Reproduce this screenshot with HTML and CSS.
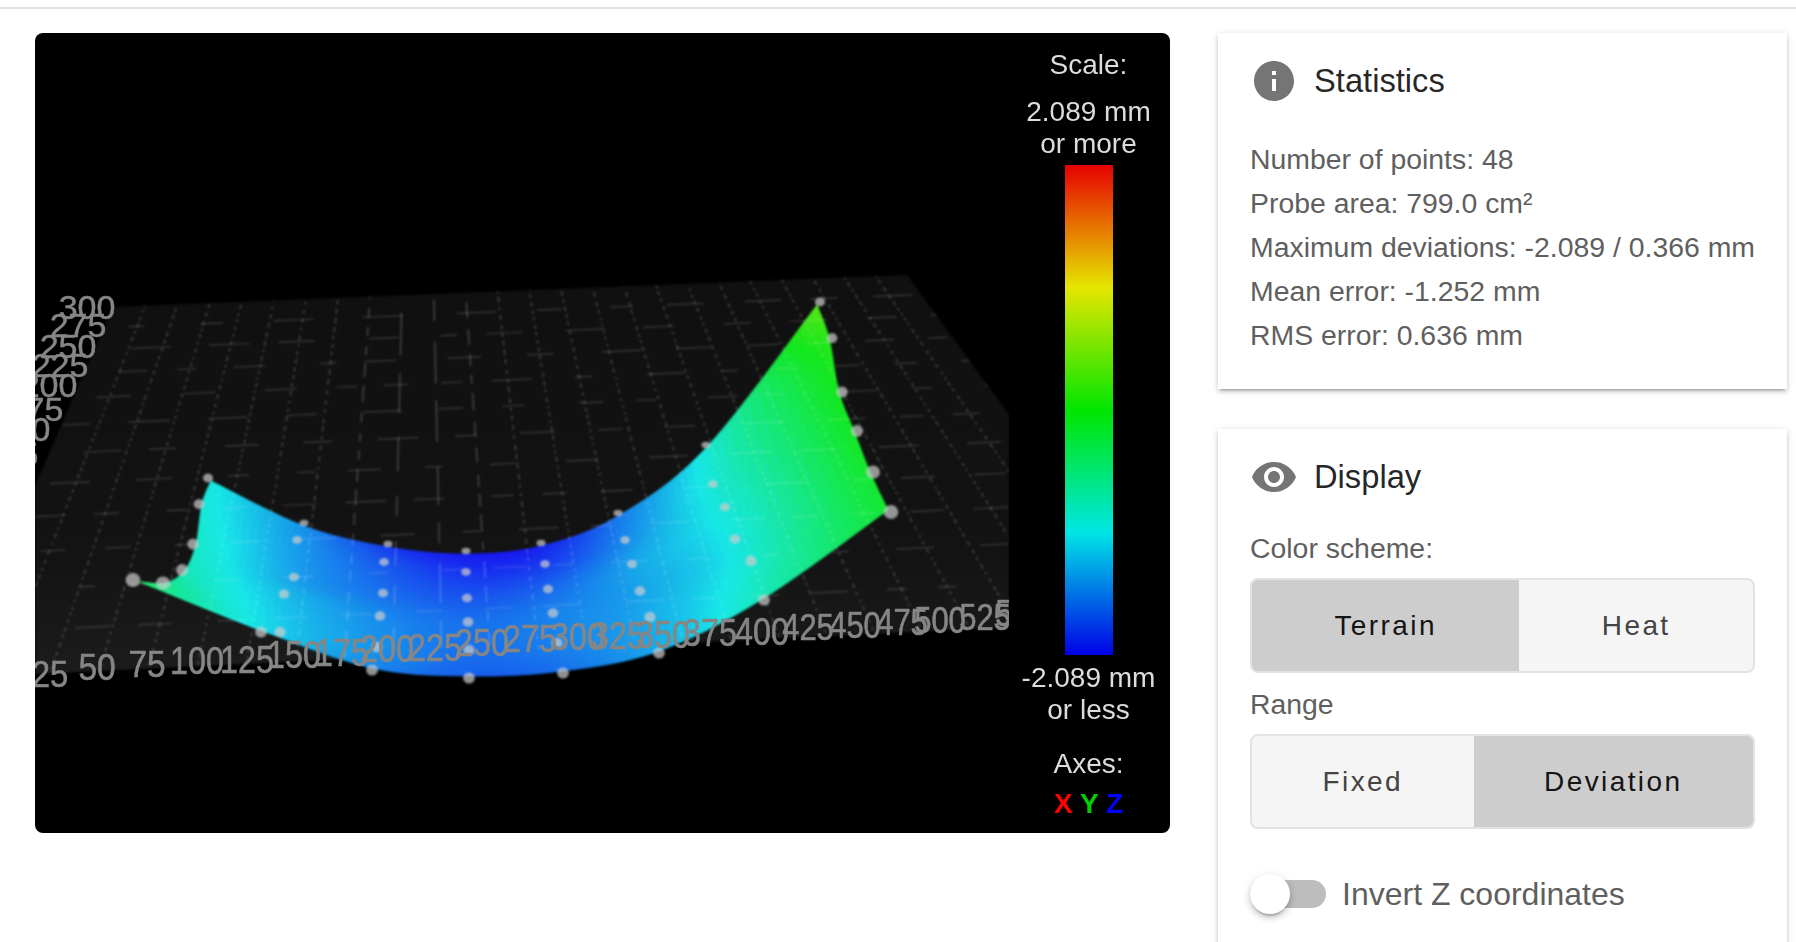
FILE: index.html
```html
<!DOCTYPE html>
<html lang="en">
<head>
<meta charset="utf-8">
<title>Height Map</title>
<link rel="stylesheet" href="styles.css">
</head>
<body>
<div class="topline"></div>
<main class="layout">
  <section class="viewer">
    <div class="stage">
      <canvas id="scene" class="scene" width="974" height="800"></canvas>
      <svg class="labels" viewBox="0 0 974 800" width="974" height="800" xmlns="http://www.w3.org/2000/svg">
        <g class="axis-y">
          <text transform="translate(-25 433)">125</text>
          <text transform="translate(-13 408)">150</text>
          <text transform="translate(0 388)">175</text>
          <text transform="translate(14 364)">200</text>
          <text transform="translate(25 344)">225</text>
          <text transform="translate(33 325)">250</text>
          <text transform="translate(43 304)">275</text>
          <text transform="translate(52 286)">300</text>
        </g>
        <g class="axis-x">
          <text transform="translate(15 654) scale(1.06 1.18)">25</text>
          <text transform="translate(62 647) scale(1.08 1.18)">50</text>
          <text transform="translate(112 644) scale(1.08 1.18)">75</text>
          <text transform="translate(162 641) scale(1.04 1.25)">100</text>
          <text transform="translate(212 640) scale(1.04 1.25)">125</text>
          <text transform="translate(259 635) scale(1.04 1.25)">150</text>
          <text transform="translate(307 633) scale(1.04 1.25)">175</text>
          <text transform="translate(352 629) scale(1.04 1.25)">200</text>
          <text transform="translate(400 628) scale(1.04 1.25)">225</text>
          <text transform="translate(447 623) scale(1.04 1.25)">250</text>
          <text transform="translate(495 619) scale(1.04 1.25)">275</text>
          <text transform="translate(543 617) scale(1.04 1.25)">300</text>
          <text transform="translate(583 616) scale(1.04 1.25)">325</text>
          <text transform="translate(628 615) scale(1.04 1.25)">350</text>
          <text transform="translate(675 613) scale(1.04 1.25)">375</text>
          <text transform="translate(727 612) scale(1.04 1.25)">400</text>
          <text transform="translate(773 607) scale(1 1.22)">425</text>
          <text transform="translate(820 605) scale(1 1.22)">450</text>
          <text transform="translate(867 602) scale(1 1.22)">475</text>
          <text transform="translate(905 600) scale(1 1.22)">500</text>
          <text transform="translate(950 597) scale(1 1.22)">525</text>
          <text transform="translate(986 593) scale(1 1.22)">550</text>
        </g>
      </svg>
    </div>
    <aside class="legend">
      <div class="legend-title">Scale:</div>
      <div class="legend-value">2.089 mm<br>or more</div>
      <div class="legend-bar"></div>
      <div class="legend-low">-2.089 mm<br>or less</div>
      <div class="legend-axes">Axes:</div>
      <div class="legend-xyz"><span class="axis-red">X</span> <span class="axis-green">Y</span> <span class="axis-blue">Z</span></div>
    </aside>
  </section>

  <div class="sidebar">
    <section class="card">
      <header class="card-head">
        <svg class="icon" viewBox="0 0 24 24" width="48" height="48" xmlns="http://www.w3.org/2000/svg"><path d="M12 2C6.48 2 2 6.48 2 12s4.48 10 10 10 10-4.48 10-10S17.52 2 12 2zm1 15h-2v-6h2v6zm0-8h-2V7h2v2z"/></svg>
        <h2 class="card-title">Statistics</h2>
      </header>
      <div class="stats">
        <div>Number of points: 48</div>
        <div>Probe area: 799.0 cm²</div>
        <div>Maximum deviations: -2.089 / 0.366 mm</div>
        <div>Mean error: -1.252 mm</div>
        <div>RMS error: 0.636 mm</div>
      </div>
    </section>

    <section class="card card-display">
      <header class="card-head">
        <svg class="icon" viewBox="0 0 24 24" width="48" height="48" xmlns="http://www.w3.org/2000/svg"><path d="M12 4.5C7 4.5 2.73 7.61 1 12c1.73 4.39 6 7.5 11 7.5s9.27-3.11 11-7.5c-1.73-4.39-6-7.5-11-7.5zM12 17c-2.76 0-5-2.24-5-5s2.24-5 5-5 5 2.24 5 5-2.24 5-5 5zm0-8c-1.66 0-3 1.34-3 3s1.34 3 3 3 3-1.34 3-3-1.34-3-3-3z"/></svg>
        <h2 class="card-title">Display</h2>
      </header>
      <div class="field-label">Color scheme:</div>
      <div class="toggle-group">
        <button class="toggle active">Terrain</button>
        <button class="toggle">Heat</button>
      </div>
      <div class="field-label">Range</div>
      <div class="toggle-group">
        <button class="toggle">Fixed</button>
        <button class="toggle active">Deviation</button>
      </div>
      <label class="switch-row">
        <span class="switch"><span class="switch-thumb"></span></span>
        <span class="switch-text">Invert Z coordinates</span>
      </label>
    </section>
  </div>
</main>
<script src="app.js"></script>
</body>
</html>
```
FILE: styles.css
```css
* { box-sizing: border-box; }
html, body { margin: 0; padding: 0; height: 942px; overflow: hidden; background: #fff; }
body { font-family: "Liberation Sans", Arial, sans-serif; }

.topline { height: 9px; border-bottom: 2px solid #e0e0e0; }

.layout {
  display: flex;
  align-items: flex-start;
  gap: 48px;
  padding: 24px 0 0 35px;
}

.viewer {
  display: flex;
  width: 1135px;
  height: 800px;
  flex: none;
  background: #000;
  border-radius: 8px;
  overflow: hidden;
}

.stage {
  position: relative;
  width: 974px;
  height: 800px;
  flex: none;
  overflow: hidden;
}
.scene { display: block; filter: blur(0.8px); }
.labels { position: absolute; left: 0; top: 0; filter: blur(0.7px); }
.labels text {
  fill: #868686;
  stroke: #868686;
  stroke-width: 0.5px;
  text-anchor: middle;
  font-family: "Liberation Sans", Arial, sans-serif;
}
.axis-y text { font-size: 34px; }
.axis-x text { font-size: 31px; }

.legend {
  flex: 1;
  display: flex;
  flex-direction: column;
  align-items: center;
  padding: 16px 2px 0 0;
  color: #dcdcdc;
  font-size: 28px;
  line-height: 32px;
  text-align: center;
  filter: blur(0.5px);
}
.legend-value { margin-top: 15px; }
.legend-bar {
  width: 48px;
  height: 490px;
  margin-top: 5px;
  flex: none;
  background: linear-gradient(to bottom, #e60000 0%, #e6e600 25%, #00e600 50%, #00e6e6 75%, #0000e6 100%);
}
.legend-low { margin-top: 7px; }
.legend-axes { margin-top: 22px; }
.legend-xyz { margin-top: 8px; font-weight: 700; }
.axis-red { color: #ff0000; }
.axis-green { color: #00d000; }
.axis-blue { color: #0000ff; }

.sidebar {
  width: 569px;
  flex: none;
  display: flex;
  flex-direction: column;
  gap: 40px;
}

.card {
  background: #fff;
  padding: 24px 32px 32px;
  box-shadow: 0 4px 2px -3px rgba(0,0,0,.25), 0 3px 4px 0 rgba(0,0,0,.14), 0 1px 8px 0 rgba(0,0,0,.12);
}
.card-display { padding-bottom: 60px; }

.card-head { display: flex; align-items: center; gap: 16px; height: 48px; }
.icon { fill: #757575; flex: none; }
.card-title { margin: 0; font-size: 32.7px; font-weight: 400; color: rgba(0,0,0,.87); }

.stats { margin-top: 32px; font-size: 28.4px; line-height: 44px; color: #5f5f5f; }

.field-label { font-size: 28.4px; line-height: 44px; color: #5f5f5f; }
.card-head + .field-label { margin-top: 25px; }

.toggle-group {
  display: flex;
  height: 95px;
  margin: 8px 0 9px;
  border: 2px solid #e2e2e2;
  border-radius: 8px;
  overflow: hidden;
  background: #f5f5f5;
}
.toggle {
  flex: 1 1 auto;
  border: 0;
  padding: 0 32px;
  background: #f5f5f5;
  color: #444;
  font-family: inherit;
  font-size: 28px;
  letter-spacing: 2.4px;
}
.toggle.active { background: #cdcdcd; color: #141414; }

.switch-row { display: flex; align-items: center; gap: 16px; height: 40px; margin-top: 45px; }
.switch { position: relative; display: block; width: 76px; height: 28px; border-radius: 14px; background: #bdbdbd; flex: none; }
.switch-thumb {
  position: absolute;
  left: 0;
  top: -6px;
  width: 40px;
  height: 40px;
  border-radius: 50%;
  background: #fff;
  box-shadow: 0 4px 2px -2px rgba(0,0,0,.2), 0 4px 6px 0 rgba(0,0,0,.14), 0 2px 10px 0 rgba(0,0,0,.12);
}
.switch-text { font-size: 32px; color: #5f5f5f; }
```
FILE: app.js
```js
(function () {
  var canvas = document.getElementById('scene');
  var ctx = canvas.getContext('2d');
  var OX = 35, OY = 33;

  // Seeded random so the broken grid is stable between runs.
  var seed = 12345;
  function rnd() { seed = (seed * 16807) % 2147483647; return seed / 2147483647; }

  // Plane corners in page coordinates.
  var NL = [-49, 678], NR = [1159, 620], FR = [907, 275], FL = [113, 307];

  function homography(a, b, c, d) {
    // Unit square (0,0)=a (1,0)=b (1,1)=c (0,1)=d
    var dx1 = b[0] - c[0], dx2 = d[0] - c[0], sx = a[0] - b[0] + c[0] - d[0];
    var dy1 = b[1] - c[1], dy2 = d[1] - c[1], sy = a[1] - b[1] + c[1] - d[1];
    var den = dx1 * dy2 - dx2 * dy1;
    var g = (sx * dy2 - dx2 * sy) / den, h = (dx1 * sy - sx * dy1) / den;
    return function (u, v) {
      var w = g * u + h * v + 1;
      return [
        ((b[0] - a[0] + g * b[0]) * u + (d[0] - a[0] + h * d[0]) * v + a[0]) / w,
        ((b[1] - a[1] + g * b[1]) * u + (d[1] - a[1] + h * d[1]) * v + a[1]) / w
      ];
    };
  }
  var project = homography(NL, NR, FR, FL);

  // Probe points: [col][row], row 0 is nearest the viewer.
  var P = [
    [[133,580],[163,583],[182,570],[193,544],[199,504],[208,478]],
    [[261,632],[280,632],[284,594],[294,577],[297,540],[304,523]],
    [[372,670],[377,647],[380,616],[383,593],[384,562],[388,544]],
    [[469,678],[469,650],[468,622],[467,598],[466,572],[466,551]],
    [[563,673],[557,643],[553,613],[548,589],[545,564],[541,543]],
    [[659,653],[650,617],[640,591],[632,564],[625,540],[618,513]],
    [[764,600],[751,561],[735,539],[725,507],[713,484],[706,445]],
    [[891,512],[873,472],[857,431],[842,392],[832,338],[820,302]]
  ];
  var V = [
    [.42,.36,.31,.29,.27,.26],
    [.23,.22,.20,.17,.16,.15],
    [.14,.15,.14,.11,.08,.05],
    [.09,.11,.11,.08,.04,.01],
    [.11,.13,.13,.10,.05,.02],
    [.18,.18,.17,.17,.14,.12],
    [.31,.28,.26,.27,.27,.27],
    [.47,.48,.49,.50,.53,.58]
  ];

  // The sheet sits a little inside the outer markers.
  var S = P.map(function (col, c) {
    return col.map(function (p, r) {
      var dx = 0, dy = 0;
      if (c === 0) dx = 3;
      if (c === 7) dx = -3;
      if (r === 5) dy = 3;
      if (r === 0) dy = -2;
      if (c === 0 && r === 0) { dx = 7; dy = 2; }
      return [p[0] + dx, p[1] + dy];
    });
  });

  function cr(a, b, c, d, t) {
    return 0.5 * (2 * b + (c - a) * t + (2 * a - 5 * b + 4 * c - d) * t * t + (3 * b - a - 3 * c + d) * t * t * t);
  }
  function clamp(i, n) { return i < 0 ? 0 : i >= n ? n - 1 : i; }
  function bicubic(get, c, r, u, v) {
    var rowsV = [];
    for (var j = -1; j <= 2; j++) {
      var rr = clamp(r + j, 6);
      rowsV.push(cr(get(clamp(c - 1, 8), rr), get(c, rr), get(clamp(c + 1, 8), rr), get(clamp(c + 2, 8), rr), u));
    }
    return cr(rowsV[0], rowsV[1], rowsV[2], rowsV[3], v);
  }
  function surfacePoint(c, r, u, v) {
    return [
      bicubic(function (a, b) { return S[a][b][0]; }, c, r, u, v) - OX,
      bicubic(function (a, b) { return S[a][b][1]; }, c, r, u, v) - OY
    ];
  }
  function surfaceValue(c, r, u, v) {
    return bicubic(function (a, b) { return V[a][b]; }, c, r, u, v);
  }

  var STOPS = [
    [0, 25, 20, 245],
    [.25, 25, 235, 235],
    [.5, 20, 235, 30],
    [.75, 235, 235, 0],
    [1, 235, 0, 0]
  ];
  function colour(v) {
    v = Math.max(0, Math.min(1, v));
    for (var i = 0; i < STOPS.length - 1; i++) {
      var a = STOPS[i], b = STOPS[i + 1];
      if (v <= b[0]) {
        var t = (v - a[0]) / (b[0] - a[0]);
        return 'rgb(' + Math.round(a[1] + (b[1] - a[1]) * t) + ',' + Math.round(a[2] + (b[2] - a[2]) * t) + ',' + Math.round(a[3] + (b[3] - a[3]) * t) + ')';
      }
    }
    return 'rgb(235,0,0)';
  }

  function drawPlane() {
    var g = ctx.createLinearGradient(0, 240, 0, 640);
    g.addColorStop(0, '#101010');
    g.addColorStop(.7, '#131313');
    g.addColorStop(1, '#1c1c1c');
    ctx.fillStyle = g;
    ctx.beginPath();
    [NL, NR, FR, FL].forEach(function (p, i) {
      if (i) ctx.lineTo(p[0] - OX, p[1] - OY); else ctx.moveTo(p[0] - OX, p[1] - OY);
    });
    ctx.closePath();
    ctx.fill();
  }

  function drawSurface() {
    var N = 14;
    for (var c = 0; c < 7; c++) {
      for (var r = 0; r < 5; r++) {
        for (var i = 0; i < N; i++) {
          for (var j = 0; j < N; j++) {
            var u0 = i / N, u1 = (i + 1) / N, v0 = j / N, v1 = (j + 1) / N;
            var a = surfacePoint(c, r, u0, v0), b = surfacePoint(c, r, u1, v0);
            var d = surfacePoint(c, r, u1, v1), e = surfacePoint(c, r, u0, v1);
            var col = colour(surfaceValue(c, r, (u0 + u1) / 2, (v0 + v1) / 2));
            ctx.fillStyle = col;
            ctx.strokeStyle = col;
            ctx.lineWidth = 0.7;
            ctx.beginPath();
            ctx.moveTo(a[0], a[1]);
            ctx.lineTo(b[0], b[1]);
            ctx.lineTo(d[0], d[1]);
            ctx.lineTo(e[0], e[1]);
            ctx.closePath();
            ctx.fill();
            ctx.stroke();
          }
        }
      }
    }
  }

  function segment(a, b, t0, t1) {
    ctx.moveTo(a[0] + (b[0] - a[0]) * t0 - OX, a[1] + (b[1] - a[1]) * t0 - OY);
    ctx.lineTo(a[0] + (b[0] - a[0]) * t1 - OX, a[1] + (b[1] - a[1]) * t1 - OY);
  }

  function drawGrid() {
    ctx.lineWidth = 1.2;
    // Lines running away from the viewer.
    ctx.strokeStyle = 'rgba(255,255,255,.27)';
    ctx.beginPath();
    for (var k = 1; k < 25; k++) {
      var a = project(k / 25, 0), b = project(k / 25, 1);
      var len = Math.hypot(b[0] - a[0], b[1] - a[1]);
      var slope = Math.abs(b[0] - a[0]) / Math.abs(b[1] - a[1]);
      var run = 3.5 + 34 * Math.exp(-Math.pow(slope / 0.06, 2));
      var gap = 4.5 + 20 * Math.exp(-Math.pow(slope / 0.06, 2));
      var s = rnd() * 8;
      while (s < len) {
        var on = run * (0.6 + rnd() * 0.8);
        segment(a, b, s / len, Math.min(1, (s + on) / len));
        s += on + gap * (0.7 + rnd() * 0.6);
      }
    }
    ctx.stroke();

    // Cross lines, broken into short pieces.
    ctx.strokeStyle = 'rgba(255,255,255,.18)';
    ctx.beginPath();
    var rows = 12;
    for (var q = 1; q < rows; q++) {
      var c = project(0, q / rows), d = project(1, q / rows);
      var l = Math.hypot(d[0] - c[0], d[1] - c[1]);
      var t = rnd() * 40;
      while (t < l) {
        var piece = 16 + rnd() * 26;
        segment(c, d, t / l, Math.min(1, (t + piece) / l));
        t += piece + 26 + rnd() * 30;
      }
    }
    ctx.stroke();
  }

  function drawPoints() {
    ctx.fillStyle = 'rgba(205,205,205,.7)';
    P.forEach(function (col, c) {
      col.forEach(function (p, r) {
        var rx = 4.5 + (5 - r) * 0.28, ry = 3.5 + (5 - r) * 0.42;
        if (r === 5) ry = 3.2;
        if ((c === 0 || c === 7) && r < 2) { rx += 1.4; ry += 1.4; }
        else if (c === 0 || c === 7) { rx += 0.6; ry += 1.2; }
        ctx.beginPath();
        ctx.ellipse(p[0] - OX, p[1] - OY, rx, ry, 0, 0, Math.PI * 2);
        ctx.fill();
      });
    });
  }

  drawPlane();
  drawSurface();
  drawGrid();
  drawPoints();
})();
```
